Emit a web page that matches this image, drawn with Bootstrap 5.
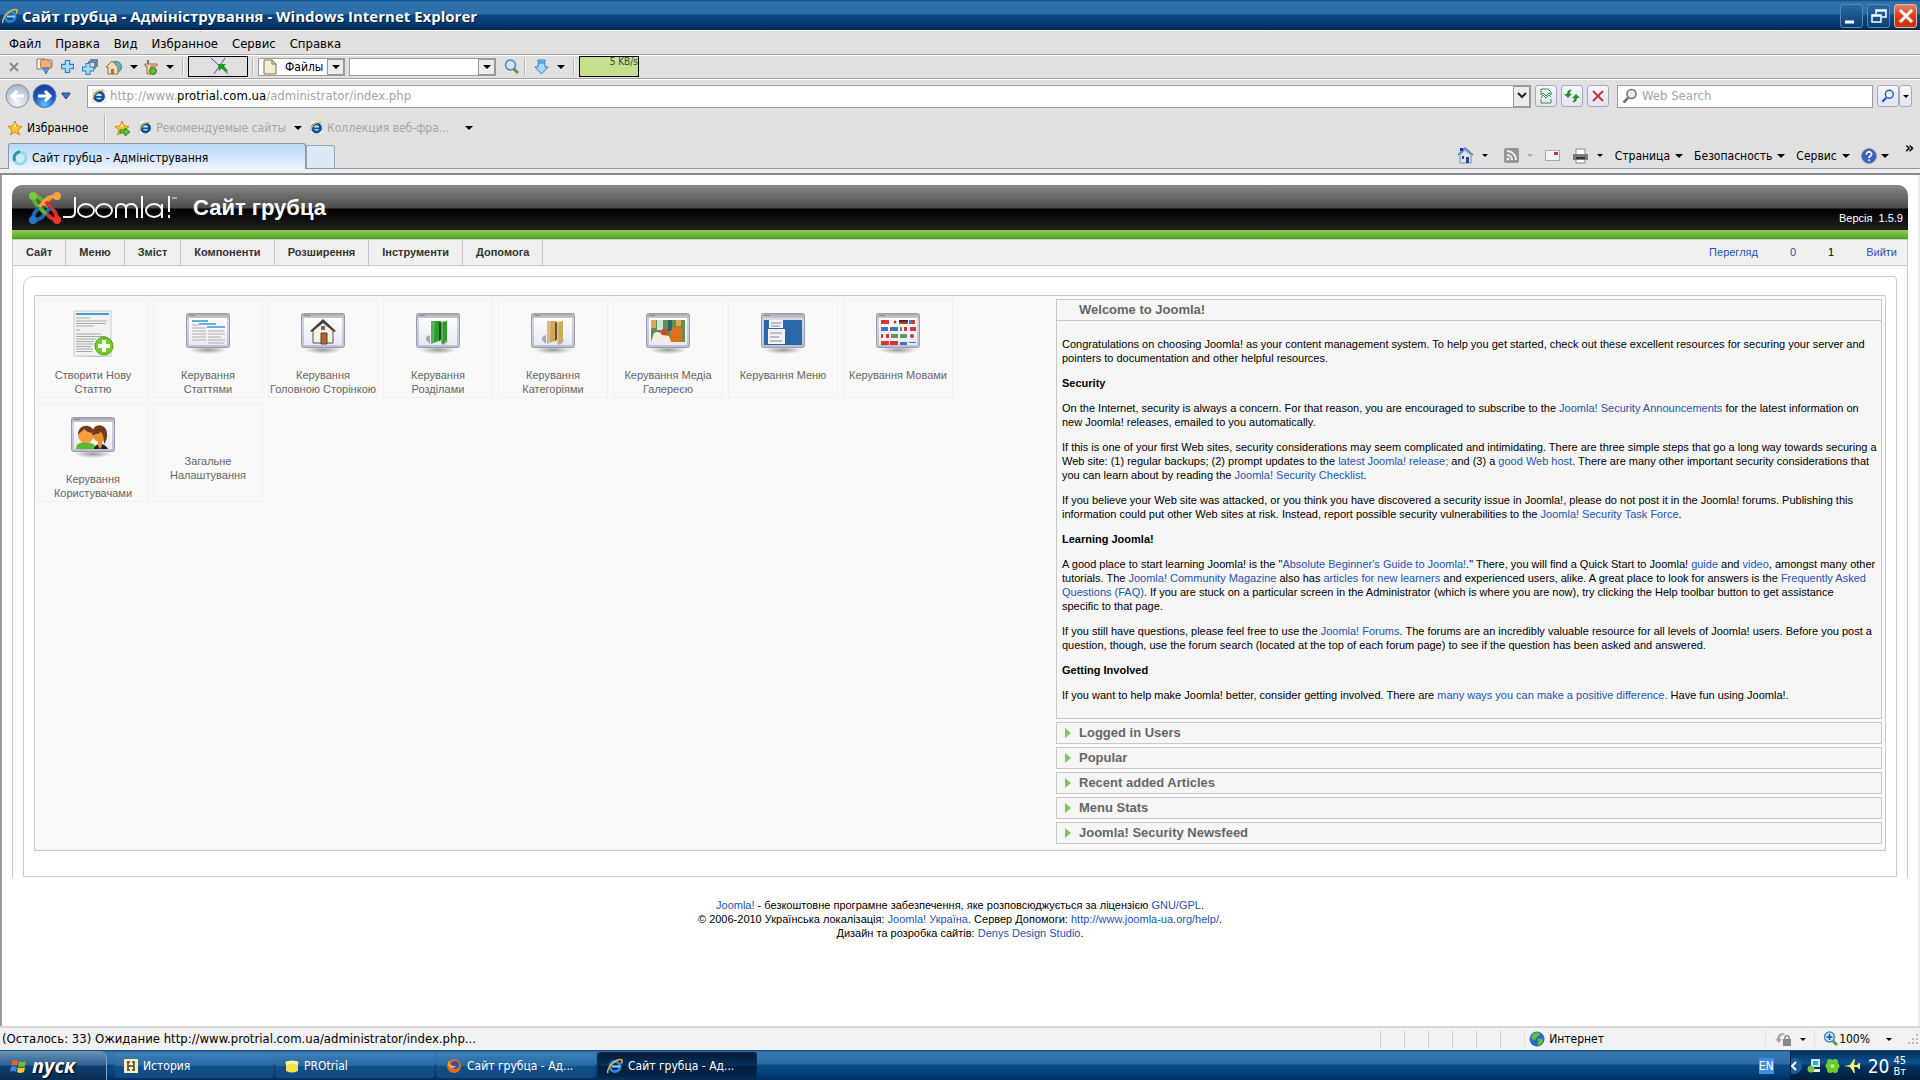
<!DOCTYPE html>
<html lang="uk">
<head>
<meta charset="utf-8">
<meta name="viewport" content="width=device-width, initial-scale=1">
<title>Сайт грубца - Адміністрування</title>
<link href="https://cdn.jsdelivr.net/npm/bootstrap@5.3.0/dist/css/bootstrap.min.css" rel="stylesheet">
<style>
:root{--ui:"DejaVu Sans Condensed","DejaVu Sans",sans-serif;--line:#c8c8c8;--lnk:#2454b0}
body{font-family:var(--ui);font-size:12px;line-height:16px;color:#000;background:#fff;min-height:100vh;overflow-x:hidden}
button,input,select{font:inherit;color:inherit;border-radius:0}
a{text-decoration:none}
svg{flex:none;display:block}
.plain{background:none;border:0;padding:0;display:flex;align-items:center}
.down{width:0;height:0;border:4px solid transparent;border-top-color:#000;border-bottom:0;flex:none}
.down.tiny{border-width:3px;border-bottom:0}
.titlebar{height:30px;background:linear-gradient(#0c4c86 0,#2e72ac 2px,#2c6da7 14px,#0a4a86 15px,#043c74 24px,#02254e 30px);color:#fff;padding:1px 3px 0 2px}
.titlebar h1{font:bold 15px/20px "Open Sans",sans-serif;margin:0;text-shadow:1px 1px 1px #01203f}
.winbtn{width:23px;height:24px;border:1px solid #5588b4;border-radius:3px;background:linear-gradient(#2a69a2,#0a3f76);display:flex;align-items:center;justify-content:center;padding:0}
.winbtn.shut{background:linear-gradient(#e8826a,#dc3c14 50%,#c83010);border-color:#f0b0a0}
.chrome{background:#e0e0e0}
.menubar{height:25px;border-top:1px solid #fff;border-bottom:1px solid #aaa;padding:2px 9px 0;gap:14px;font-size:13px}
.menubar a,.cmd{color:#000}
.toolrow{height:24px;border-top:1px solid #fff;border-bottom:1px solid #a4a4a4;padding:0 0 1px 8px}
.vsep{width:2px;align-self:stretch;margin:2px 0;border-left:1px solid #b4b4b4;border-right:1px solid #f8f8f8;flex:none}
.meter{width:60px;height:21px;border:1px solid #000;flex:none}
.meter.go{background:#c4e08c;font-size:10px;line-height:10px;text-align:right;color:#444}
.field{background:#fff;border:1px solid #9a9a9a;display:flex;align-items:center}
.field input,.field select{border:0;outline:0;background:none;appearance:none;min-width:0;padding:0}
.field input::placeholder{color:#a4a4a4}
.drop{width:17px;height:16px;border:1px solid #999;background:#ececec;display:flex;align-items:center;justify-content:center;padding:0;flex:none}
.navrow{height:33px;border-top:1px solid #fff;padding:0 8px 0 5px;font-size:13px}
.addr{height:23px;min-width:0}
.addr .grey,.dim{color:#a4a4a4}
.gobtn{width:22px;height:22px;border:1px solid #a4a8bc;border-radius:3px;background:linear-gradient(#f6f6fa,#e2e4f0);display:flex;align-items:center;justify-content:center;padding:0;flex:none}
.favrow{height:31px;padding-left:7px}
.tabrow{height:26px;padding:0 6px 0 8px;border-bottom:1px solid #9298a4}
.tab{height:26px;width:298px;border:1px solid #8c96a4;border-bottom:0;border-radius:3px 3px 0 0;background:linear-gradient(#bcd8f8,#d4e6fa 60%,#eef5fd);padding:2px 3px 0;margin-bottom:-1px}
.newtab{height:23px;width:29px;border:1px solid #9aa4b2;border-bottom:0;border-radius:0 3px 0 0;background:#dce8f6;padding:0}
.cmds .plain[data-menu]{gap:5px;margin-right:11px;white-space:nowrap}
.understrip{height:6px;background:#ecf0f6;border-bottom:2px solid #8a8c92}
.viewport{border-left:2px solid #9a9aa0;border-right:2px solid #ececf0;padding:10px 10px 0;font-family:"Liberation Sans",Arial,sans-serif;font-size:11px;line-height:14px}
.viewport a{color:var(--lnk)}
.jhead{height:45px;border-radius:10px 10px 0 0;background:linear-gradient(#878787 0,#4c4c4c 23px,#000 24px,#202020 45px);color:#fff;padding:0 5px 0 16px}
.jhead h2{font-size:22px;line-height:26px;font-weight:bold;margin:0}
.jgreen{height:10px;background:linear-gradient(#8cca55,#6cb83a 50%,#569a30 90%,#b9dd9c 90%)}
.jframe{border:1px solid var(--line);border-top:0;border-bottom:0}
.jmenu{height:26px;background:#f0f0f0;border-bottom:1px solid var(--line)}
.jmenu .items a{color:#333;font-weight:bold;line-height:25px;padding:0 13px;border-right:1px solid var(--line)}
.jstat{padding-right:10px;gap:32px;line-height:24px}
.jbox{margin:10px 10px 0;padding:18px 10px 25px;border:1px solid var(--line);border-radius:10px 4px 0 0}
.jpanel{border:1px solid var(--line);background:#f9f9f9;padding:3px;min-height:556px}
.cells{gap:5px;flex:1;align-content:flex-start;padding-right:50px}
.cell{width:110px;height:99px;border:1px solid #f0f0f0;padding-top:9px;text-align:center;color:#666!important;display:flex;flex-direction:column;align-items:center}
.cell svg{margin-bottom:11px}
.cell.noimg{justify-content:center;padding-top:31px}
.side{width:826px;flex:none;display:flex;flex-direction:column;gap:3px}
.pane{border:1px solid var(--line);background:#f6f6f6}
.pane h3{margin:0;font-size:13px}
.pane h3 button{background:none;border:0;width:100%;text-align:left;height:20px;padding:0 8px;color:#666;font-weight:bold;display:flex;align-items:center;gap:8px}
.pane .tri{width:6px;height:10px;border-left:6px solid #84c464;border-top:5px solid transparent;border-bottom:5px solid transparent}
.pane.open .tri{visibility:hidden}
.words{border-top:1px solid var(--line);padding:16px 5px 16px}
.words p,.words h4{margin:0 0 11px;white-space:nowrap}
.words h4{font-size:11px;line-height:14px;font-weight:bold}
.words>:last-child{margin:0}
.jfoot{text-align:center;padding:21px 0 0}
.statusbar{height:24px;background:#f2f2f2;border-top:2px solid #d8d8d8}
.cellsep{width:24px;border-left:1px solid #ccc;align-self:stretch;margin:3px 0;flex:none}
.loading{font-size:13px;padding-left:2px}
.taskbar{height:30px;background:linear-gradient(#0a3d6e 0,#3878b2 2px,#2a6ca6 14px,#0a4a86 15px,#054078 24px,#022c58);color:#fff;padding-top:1px}
.start{width:107px;height:29px;border:0;border-right:1px solid #7aa6cc;border-radius:0 8px 0 0;background:linear-gradient(#6a92b6,#2d6192 14px,#0d3f70 15px,#0a2c50);color:#fff;font:italic bold 20px/26px "Open Sans",sans-serif;padding:0 0 0 10px;text-shadow:1px 1px 2px #000}
.tasks{gap:3px}
.task{height:25px;width:158px;border:0;border-radius:2px;background:linear-gradient(#3c80ba,#2768a2 50%,#114f8a 51%,#0f4a82);color:#fff;padding:0 9px;text-align:left;gap:5px;display:flex;align-items:center;white-space:nowrap}
.task.on{background:linear-gradient(#021c38,#04305c 50%,#001c3c 51%,#02284e);box-shadow:0 0 0 1px #0a2c50}
.tray{background:linear-gradient(#052f58,#0b5290 40%,#03305c 55%,#011d3c);border-left:1px solid #02203f;padding:0 14px 0 0;height:29px}
.big{font-size:19px;line-height:22px}
.stack{font-size:11px;line-height:11px}
</style>
<script src="https://cdn.jsdelivr.net/npm/bootstrap@5.3.0/dist/js/bootstrap.bundle.min.js"></script>
</head>
<body class="d-flex flex-column">
<svg width="0" height="0" class="position-absolute" aria-hidden="true">
<defs>
<linearGradient id="gw" x1="0" y1="0" x2="0" y2="1"><stop offset="0" stop-color="#fff"/><stop offset="1" stop-color="#e6e8f4"/></linearGradient>
<linearGradient id="gfr" x1="0" y1="0" x2="0" y2="1"><stop offset="0" stop-color="#a8aab2"/><stop offset=".2" stop-color="#d4d6e0"/><stop offset="1" stop-color="#bcc0d4"/></linearGradient>
<radialGradient id="gsh"><stop offset="0" stop-color="#999"/><stop offset="1" stop-color="#999" stop-opacity="0"/></radialGradient>
<radialGradient id="gbl" cx=".5" cy=".85" r=".9"><stop offset="0" stop-color="#5cc4ff"/><stop offset=".5" stop-color="#1c5cc0"/><stop offset="1" stop-color="#14388c"/></radialGradient>
<radialGradient id="ggr" cx=".5" cy=".8" r=".9"><stop offset="0" stop-color="#f4f8fc"/><stop offset="1" stop-color="#9cacc0"/></radialGradient>
<symbol id="ie" viewBox="0 0 16 16"><circle cx="8" cy="8.5" r="5" fill="none" stroke="#2a86d8" stroke-width="3"/><path d="M5 8.5h8" stroke="#9cd8fa" stroke-width="2"/><path d="M1 15C-1 11 8 1 14 1.500c2 .5 1 3 0 4" fill="none" stroke="#f0b830" stroke-width="1.500"/></symbol>
<symbol id="iepage" viewBox="0 0 16 16"><path d="M1 0h11l3 3v13H1z" fill="#fdfdfd" stroke="#d0d4dc"/><circle cx="8" cy="8.500" r="5" fill="#bce4fa" stroke="#14509c" stroke-width="3.500"/><path d="M4 9h9" stroke="#14509c" stroke-width="2"/><path d="M1 12C1 6 7 0 14 2" fill="none" stroke="#e0c050" stroke-width="1.500"/></symbol>
<symbol id="win" viewBox="0 0 48 48"><ellipse cx="24" cy="41" rx="19" ry="4" fill="url(#gsh)"/><rect x="2.500" y="4.500" width="43" height="34" rx="2" fill="url(#gfr)" stroke="#9a9cac"/><rect x="5" y="9" width="38" height="27" fill="url(#gw)"/><path d="M5 6.500h6" stroke="#888"/></symbol>
<symbol id="star" viewBox="0 0 16 16"><path d="M8 1l2 5 5 .5-4 3.500 1.500 5L8 12l-4.500 3L5 10 1 6.500 6 6z" fill="#ffc428" stroke="#d88a10"/><path d="M8 3l1 4-3 0z" fill="#fff0a0"/></symbol>
<symbol id="mag" viewBox="0 0 16 16"><path d="M6 10l-4.500 4.500" stroke="currentColor" stroke-width="2.500"/><circle cx="9.500" cy="6" r="4.500" fill="#e4f2fc" stroke="currentColor" stroke-width="1.600"/></symbol>
<symbol id="magr" viewBox="0 0 16 16"><path d="M9 9l5 5" stroke="#6c9440" stroke-width="3"/><circle cx="6.500" cy="6" r="5" fill="#c4e8fc" stroke="#5088b8" stroke-width="1.500"/></symbol>
<symbol id="cross" viewBox="0 0 12 12"><path d="M6 0v12M0 6h12" stroke="#2f7cc0" stroke-width="5"/><path d="M6 1v10M1 6h10" stroke="#a8dcfa" stroke-width="3"/></symbol>
<symbol id="folder" viewBox="0 0 22 25"><path d="M0 17l4-2v9l-4-4z" fill="#aaa"/><path d="M19 19l3 2-4 4-3-1z" fill="#aaa"/><path d="M5 1h10v19L5 24z" fill="currentColor"/><path d="M13 2l3 1v14l-3 5z" fill="#000" opacity=".5"/><path d="M15 2l6-1v19l-4 4-2-2z" fill="currentColor"/><path d="M5 1h4L8 23l-3 1zM15 2l2-.5v21l-2-1z" fill="#fff" opacity=".22"/></symbol>
</defs>
</svg>

<header class="titlebar d-flex align-items-center gap-1">
<svg width="16" height="16"><use href="#ie"/></svg>
<h1 class="flex-grow-1">Сайт грубца - Адміністрування - Windows Internet Explorer</h1>
<button class="winbtn" aria-label="Свернуть"><svg width="13" height="16"><path d="M0 14h9" stroke="#fff" stroke-width="3"/></svg></button>
<button class="winbtn" aria-label="Восстановить"><svg width="16" height="16" fill="none" stroke="#fff" stroke-width="1.500"><path d="M5 6V2h10v7h-4M5 3h10M1 7h9v7H1zM1 8h9"/></svg></button>
<button class="winbtn shut" aria-label="Закрыть"><svg width="16" height="16"><path d="M2 2l12 12M14 2L2 14" stroke="#fff" stroke-width="3"/></svg></button>
</header>

<div class="chrome">
<nav class="menubar d-flex align-items-center"><a href="#">Файл</a><a href="#">Правка</a><a href="#">Вид</a><a href="#">Избранное</a><a href="#">Сервис</a><a href="#">Справка</a></nav>
<div class="toolrow d-flex align-items-center">
<button class="plain me-3" aria-label="Закрыть панель"><svg width="12" height="12"><path d="M2 2l8 8M10 2L2 10" stroke="#888" stroke-width="2"/></svg></button>
<button class="plain" aria-label="Загрузка"><svg width="17" height="17"><path d="M1 1h8v10H1zM11 2h5v7h-5z" fill="#fff" stroke="#777"/><path d="M4 3c4-3 9-1 11 2v5H5z" fill="#f0b078" stroke="#b87444"/><path d="M7 10h6l-3 6z" fill="#5c9ce0" stroke="#3870b0"/></svg></button>
<button class="plain ms-2" aria-label="Добавить"><svg width="13" height="13"><use href="#cross"/></svg></button>
<button class="plain ms-2" aria-label="Добавить все"><svg width="16" height="16"><path d="M6 3h7v7M8 1h7v7" fill="none" stroke="#44688c" stroke-width="1.500"/><use href="#cross" x="0" y="4" width="12" height="12"/></svg></button>
<button class="plain ms-2 me-2" aria-label="Домой"><svg width="16" height="16"><circle cx="10" cy="8" r="5.500" fill="#5ab4e4" stroke="#3c8c3c"/><path d="M0 8l6-6 6 6v7H2V8z" fill="#f4dcb0" stroke="#997044"/><path d="M5 10h3v5H5z" fill="#a87444"/></svg></button>
<span class="down"></span>
<button class="plain ms-1 me-2" aria-label="Правка"><svg width="16" height="16"><path d="M3 5h12v2H9v8H5V7H3z" fill="#f4d4b4" stroke="#98684c"/><path d="M6 1v4" stroke="#98684c" stroke-width="2"/><circle cx="11" cy="12" r="3.500" fill="#68b83c" stroke="#387818"/></svg></button>
<span class="down me-2"></span>
<span class="vsep"></span>
<span class="meter ms-1"><svg width="58" height="19"><path d="M22 1l17 16M36 1L25 17" stroke="#4050b8"/><path d="M29 7h8l-2 2 4 5-2 1-4-4-3 3z" fill="#1c9c1c"/></svg></span>
<span class="vsep ms-1"></span>
<label class="field ms-1 ps-1"><svg width="14" height="16" class="me-2"><path d="M1 1h8l4 4v10H1z" fill="#f4ecd4" stroke="#777450"/><path d="M9 1v4h4" fill="none" stroke="#777450"/></svg><select style="width:42px" aria-label="Тип"><option>Файлы</option></select><span class="drop"><span class="down"></span></span></label>
<div class="field ms-1" style="width:147px"><input class="flex-grow-1" aria-label="Поиск файлов"><button class="drop" aria-label="Список"><span class="down"></span></button></div>
<button class="plain ms-2 me-1" aria-label="Найти"><svg width="16" height="16"><use href="#magr"/></svg></button>
<span class="vsep me-2"></span>
<button class="plain me-2" aria-label="Загрузки"><svg width="15" height="16"><path d="M4 1h7v2H4zM4 4h7v4h3l-6.500 7L1 8h3z" fill="#a0dcfa" stroke="#2f80c0"/></svg></button>
<span class="down me-2"></span>
<span class="vsep"></span>
<span class="meter go ms-1">5 KB/s</span>
</div>

<div class="navrow d-flex align-items-center">
<button class="plain" aria-label="Назад"><svg width="26" height="26"><circle cx="12.500" cy="13" r="11.500" fill="url(#ggr)" stroke="#8090a4"/><path d="M19 13H8M12 8l-5 5 5 5" fill="none" stroke="#fff" stroke-width="3"/></svg></button>
<button class="plain" aria-label="Вперёд"><svg width="26" height="26"><circle cx="13.500" cy="13" r="11.500" fill="url(#gbl)" stroke="#5c7ca8"/><path d="M7 13h11M14 8l5 5-5 5" fill="none" stroke="#fff" stroke-width="3"/></svg></button>
<button class="plain ms-1 me-3" aria-label="Последние страницы"><svg width="10" height="8"><path d="M1 1h8v1L5 7 1 2z" fill="#3c78bc" stroke="#244c80"/></svg></button>
<div class="field addr flex-grow-1 ps-1"><svg width="14" height="14" class="me-1"><use href="#iepage"/></svg><span class="flex-grow-1"><span class="grey">http://www.</span>protrial.com.ua<span class="grey">/administrator/index.php</span></span><button class="drop" style="height:21px" aria-label="Адреса"><svg width="10" height="8"><path d="M1 1l4 4 4-4" fill="none" stroke="#222" stroke-width="2"/></svg></button></div>
<div class="d-flex gap-1 ms-1 me-2"><button class="gobtn" aria-label="Совместимость"><svg width="14" height="16" fill="none" stroke="#2c9444"><path d="M2 7V1h7l3 3v3M2 11v4h10v-4M2 10l2-3 3 3 3-3 2 2M2 7l2-2 3 3 3-3 2 2"/></svg></button><button class="gobtn" aria-label="Обновить"><svg width="16" height="16"><path d="M8 2c-3-1-5 1-5 4H0l4 4 4-4H6c0-2 0-3 2-4zM8 14c3 1 5-1 5-4h3l-4-4-4 4h2c0 2 0 3-2 4z" fill="#2c8c30"/></svg></button><button class="gobtn" aria-label="Стоп"><svg width="12" height="12"><path d="M1 1l10 10M11 1L1 11" stroke="#c03838" stroke-width="2"/></svg></button></div>
<label class="field addr" style="width:256px"><svg width="16" height="16" class="mx-1 text-secondary"><use href="#mag"/></svg><input class="flex-grow-1" placeholder="Web Search" aria-label="Web Search"></label>
<button class="gobtn ms-1" aria-label="Искать" style="color:#2454c8"><svg width="14" height="14"><use href="#mag"/></svg></button><button class="gobtn" style="width:13px" aria-label="Параметры поиска"><span class="down tiny"></span></button>
</div>

<div class="favrow d-flex align-items-center">
<svg width="16" height="16"><use href="#star"/></svg><a class="cmd ms-1 me-3" href="#">Избранное</a><span class="vsep me-2"></span>
<svg width="17" height="16"><use href="#star" width="16"/><path d="M6 10h5V8l5 4-5 4v-3H6z" fill="#5cc83c" stroke="#2c8820"/></svg>
<svg width="13" height="13" class="ms-2 me-1"><use href="#iepage"/></svg><a class="dim me-2" href="#">Рекомендуемые сайты</a><span class="down"></span>
<svg width="13" height="13" class="ms-2 me-1"><use href="#iepage"/></svg><a class="dim me-3" href="#">Коллекция веб-фра...</a><span class="down"></span>
</div>

<div class="tabrow d-flex align-items-end">
<button class="tab d-flex align-items-center gap-1"><svg width="16" height="16"><circle cx="8" cy="8" r="6" fill="none" stroke="#8cdce8" stroke-width="3"/><path d="M8 2a6 6 0 0 0-5 9" fill="none" stroke="#209ca8" stroke-width="3"/></svg>Сайт грубца - Адміністрування</button><button class="newtab" aria-label="Новая вкладка"></button>
<div class="cmds ms-auto d-flex align-items-center align-self-start pt-1">
<button class="plain" aria-label="Домашняя"><svg width="17" height="17"><path d="M1 8l7-7 8 7" fill="none" stroke="#5878b0" stroke-width="1.500"/><path d="M3 8l5-5 6 5v8H3z" fill="#d8e4f8" stroke="#7890b8"/><path d="M3 1h3v3H3z" fill="#2030b0"/><path d="M9 10h3v6H9z" fill="#2848a0"/><path d="M5 9h2v3H5z" fill="#445"/></svg><span class="down tiny ms-2"></span></button>
<button class="plain ms-3" aria-label="Каналы"><svg width="15" height="15"><rect width="15" height="15" rx="2" fill="#969696"/><g fill="none" stroke="#f0f0f0" stroke-width="2"><path d="M3 7a5 5 0 0 1 5 5M3 3a9 9 0 0 1 9 9"/></g><circle cx="4" cy="11" r="1.500" fill="#f0f0f0"/></svg><span class="down tiny opacity-25 ms-2 me-2"></span></button>
<button class="plain ms-1" aria-label="Почта"><svg width="15" height="11"><rect x=".5" y=".5" width="14" height="10" fill="#f4f4fa" stroke="#aaa"/><path d="M9 2h4v3H9z" fill="#d03030"/></svg></button>
<button class="plain ms-2 ps-1 me-2" aria-label="Печать"><svg width="17" height="16"><path d="M4 6V1h9v5M4 11h9v4H4z" fill="#fff" stroke="#888"/><path d="M1 6h15v6H1z" fill="#777c84"/><path d="M4 9h9v2H4z" fill="#333"/></svg><span class="down tiny ms-2 me-1"></span></button>
<button class="plain" data-menu="page">Страница<span class="down"></span></button>
<button class="plain" data-menu="safety">Безопасность<span class="down"></span></button>
<button class="plain" data-menu="tools">Сервис<span class="down"></span></button>
<button class="plain me-3" aria-label="Справка"><svg width="16" height="16" class="me-1"><circle cx="8" cy="8" r="7.500" fill="#3c64b8" stroke="#8c98b4"/><path d="M5.500 6.500c0-4 5.500-3 5 0-.3 1.500-2.500 1.500-2.500 3.500M8 11.500v1.500" fill="none" stroke="#fff" stroke-width="1.800"/></svg><span class="down"></span></button>
<b class="align-self-start fs-6" style="line-height:1px">»</b>
</div>
</div>
<div class="understrip"></div>
</div>

<main class="viewport flex-grow-1">
<div class="jhead d-flex align-items-center">
<svg width="34" height="34" viewBox="0 0 34 34" fill="none" stroke-linecap="round" stroke-width="4"><path d="M5 5q1 7 5 10l5 5" stroke="#5ab030"/><path d="M5 5q6 0 9 4l6 6" stroke="#5ab030"/><path d="M29 5q-6 0-9 4l-4 4" stroke="#f08c20"/><path d="M29 5q-8 0-11 3l-6 7" stroke="#f8a040" stroke-width="3"/><path d="M29 29q0-7-5-11l-5-6" stroke="#dc2c2c"/><path d="M29 29q-6-1-9-5" stroke="#dc2c2c"/><path d="M5 29q7 0 10-4l6-7" stroke="#1c68b0"/><path d="M5 29q0-6 3-9l2-2" stroke="#1c68b0"/><path d="M13 18l4 4" stroke="#5ab030"/><g stroke="none"><circle cx="5" cy="5" r="4" fill="#78c840"/><circle cx="29" cy="5" r="4" fill="#fca040"/><circle cx="29" cy="29" r="4" fill="#ee3434"/><circle cx="5" cy="29" r="4" fill="#2478c4"/></g></svg>
<svg width="115" height="28" viewBox="0 0 115 28" class="me-3" role="img" aria-label="Joomla!" fill="none" stroke="#f4f4f4" stroke-width="2"><path d="M13 3v15q0 5-5 5H1"/><ellipse cx="24" cy="16.500" rx="8" ry="6.500"/><ellipse cx="42" cy="16.500" rx="8" ry="6.500"/><path d="M54 24v-9q0-5 5-5t5 5v9M64 15q0-5 5-5t6 5v9M80 2v22"/><ellipse cx="92" cy="16.500" rx="8" ry="6.500"/><path d="M100 10v14M107 2v16M107 21v3"/><path d="M110 4h5" stroke-width="1"/></svg>
<h2>Сайт грубца</h2>
<span class="ms-auto pt-3 mt-1">Версія&nbsp; 1.5.9</span>
</div>
<div class="jgreen"></div>
<div class="jframe">
<nav class="jmenu d-flex">
<div class="items d-flex"><a href="#">Сайт</a><a href="#">Меню</a><a href="#">Зміст</a><a href="#">Компоненти</a><a href="#">Розширення</a><a href="#">Інструменти</a><a href="#">Допомога</a></div>
<div class="jstat d-flex ms-auto"><a href="#">Перегляд</a><a href="#">0</a><span>1</span><a href="#">Вийти</a></div>
</nav>
<div class="jbox">
<div class="jpanel d-flex">
<div class="cells d-flex flex-wrap">
<a class="cell" href="#"><svg width="48" height="48"><ellipse cx="26" cy="47" rx="20" ry="2" fill="url(#gsh)"/><path d="M5 2h37v45H5z" fill="#f2f2f2" stroke="#ccc"/><path d="M7 4h33v2H7z" fill="#3c9cd4"/><path d="M7 9h14M7 12h31M7 14.500h30M7 17h18M7 21h4M7 25h25M7 27.500h30M7 30h20M7 32.500h18M7 35h18M7 37.500h15M7 40h17M7 42.500h16" stroke="#a8a8a8"/><circle cx="35" cy="37" r="9" fill="#74cc28" stroke="#4c9c18"/><path d="M35 31v12M29 37h12" stroke="#fff" stroke-width="4"/></svg>Створити Нову<br>Статтю</a>
<a class="cell" href="#"><svg width="48" height="48"><use href="#win"/><path d="M8 12h16M15 15h17M23 18h18" stroke="#68b0dc" stroke-width="2"/><path d="M8 16h7M8 19h14M8 22h14M8 25h14M8 28h14M8 31h14M24 22h16M24 25h17M24 28h13M24 31h17M24 34h16" stroke="#c4c4c4" stroke-width="1.500"/></svg>Керування<br>Статтями</a>
<a class="cell" href="#"><svg width="48" height="48"><use href="#win"/><path d="M14 20l10-8 10 8v14H14z" fill="#f6f0e8" stroke="#554"/><path d="M11 22L24 10l13 12-2 1-11-9-11 9z" fill="#4c4038"/><path d="M22 24h6v11h-6z" fill="#b86428" stroke="#543"/><path d="M22 17h4v4h-4z" fill="#765"/></svg>Керування<br>Головною Сторінкою</a>
<a class="cell" href="#"><svg width="48" height="48" style="color:#2c9c2c"><use href="#win"/><use href="#folder" x="12" y="11" width="22" height="25"/></svg>Керування<br>Розділами</a>
<a class="cell" href="#"><svg width="48" height="48" style="color:#d0a858"><use href="#win"/><use href="#folder" x="13" y="11" width="22" height="25"/></svg>Керування<br>Категоріями</a>
<a class="cell" href="#"><svg width="48" height="48"><use href="#win"/><path d="M7 11h34v22H7z" fill="#5c9448"/><path d="M7 11h5v8H7zM32 11h5v6h-5z" fill="#d8a860"/><path d="M13 11h6v10h-6z" fill="#cce4e8"/><path d="M24 11h4v11h-4z" fill="#34606c"/><path d="M18 20h6v6h-6z" fill="#d84820"/><path d="M27 21q6-6 11-2v14H26z" fill="#e07020"/><path d="M7 33l3-9q5-3 8 2l7 1 2 6z" fill="#f4ece0"/></svg>Керування Медіа<br>Галереєю</a>
<a class="cell" href="#"><svg width="48" height="48"><use href="#win"/><path d="M5 9h38v27H5z" fill="#2c68a8"/><path d="M5 9h38v2H5z" fill="#d4dce8"/><path d="M10 11h14v8H10zM9 20h17v15H9z" fill="#f0f2f6"/><path d="M12 14h10M12 17h9M11 24h12M11 28h9M11 32h12" stroke="#889"/></svg>Керування Меню</a>
<a class="cell" href="#"><svg width="48" height="48"><use href="#win"/><path d="M7 11h8v4H7zM25 13h9v2h-9zM41 11h-3v4h3zM36 18h6v4h-6zM7 25h8v4H7zM7 32h8v4H7zM16 32h8v4h-8zM30 18h3v4h-3z" fill="#d83434"/><path d="M25 11h9v2h-9z" fill="#333"/><path d="M35 11h3v4h-3zM7 18h7v4H7zM16 18h8v4h-8zM26 33h7v3h-7zM35 33h7v1h-7z" fill="#4474b8"/><path d="M26 18h2v4h-2zM17 25h7v4h-7zM26 25h7v4h-7z" fill="#5c9c54"/><path d="M9 25h3v4H9zM19 11h4v4h-4z" fill="#fff"/><circle cx="21" cy="13" r="1.500" fill="#e02020"/><circle cx="38" cy="27" r="2" fill="#c03050"/></svg>Керування Мовами</a>
<a class="cell" href="#"><svg width="48" height="48"><use href="#win"/><path d="M7 36c0-5 4-7 9-7s11 2 11 7z" fill="#5cb830"/><path d="M25 36c0-5 10-8 14 0z" fill="#222"/><circle cx="17" cy="22" r="8" fill="#f4a040"/><circle cx="31" cy="22" r="7" fill="#e89030"/><path d="M9 22c0-12 15-12 16-2-5 0-8-2-10-4-2 3-4 3-6 6zM23 22c0-14 16-12 15 0 0 5-2 8-3 9 0-5-1-10-3-12-2 2-6 2-9 3z" fill="#743c1c"/><path d="M29 28h4v5l-2 3-2-3z" fill="#e89030"/></svg>Керування<br>Користувачами</a>
<a class="cell noimg" href="#">Загальне<br>Налаштування</a>
</div>
<div class="side">
<section class="pane open"><h3><button><span class="tri"></span>Welcome to Joomla!</button></h3>
<div class="words">
<p>Congratulations on choosing Joomla! as your content management system. To help you get started, check out these excellent resources for securing your server and<br>pointers to documentation and other helpful resources.</p>
<h4>Security</h4>
<p>On the Internet, security is always a concern. For that reason, you are encouraged to subscribe to the <a href="#">Joomla! Security Announcements</a> for the latest information on<br>new Joomla! releases, emailed to you automatically.</p>
<p>If this is one of your first Web sites, security considerations may seem complicated and intimidating. There are three simple steps that go a long way towards securing a<br>Web site: (1) regular backups; (2) prompt updates to the <a href="#">latest Joomla! release;</a> and (3) a <a href="#">good Web host</a>. There are many other important security considerations that<br>you can learn about by reading the <a href="#">Joomla! Security Checklist</a>.</p>
<p>If you believe your Web site was attacked, or you think you have discovered a security issue in Joomla!, please do not post it in the Joomla! forums. Publishing this<br>information could put other Web sites at risk. Instead, report possible security vulnerabilities to the <a href="#">Joomla! Security Task Force</a>.</p>
<h4>Learning Joomla!</h4>
<p>A good place to start learning Joomla! is the "<a href="#">Absolute Beginner's Guide to Joomla!</a>." There, you will find a Quick Start to Joomla! <a href="#">guide</a> and <a href="#">video</a>, amongst many other<br>tutorials. The <a href="#">Joomla! Community Magazine</a> also has <a href="#">articles for new learners</a> and experienced users, alike. A great place to look for answers is the <a href="#">Frequently Asked<br>Questions (FAQ)</a>. If you are stuck on a particular screen in the Administrator (which is where you are now), try clicking the Help toolbar button to get assistance<br>specific to that page.</p>
<p>If you still have questions, please feel free to use the <a href="#">Joomla! Forums</a>. The forums are an incredibly valuable resource for all levels of Joomla! users. Before you post a<br>question, though, use the forum search (located at the top of each forum page) to see if the question has been asked and answered.</p>
<h4>Getting Involved</h4>
<p>If you want to help make Joomla! better, consider getting involved. There are <a href="#">many ways you can make a positive difference.</a> Have fun using Joomla!.</p>
</div></section>
<section class="pane"><h3><button><span class="tri"></span>Logged in Users</button></h3></section>
<section class="pane"><h3><button><span class="tri"></span>Popular</button></h3></section>
<section class="pane"><h3><button><span class="tri"></span>Recent added Articles</button></h3></section>
<section class="pane"><h3><button><span class="tri"></span>Menu Stats</button></h3></section>
<section class="pane"><h3><button><span class="tri"></span>Joomla! Security Newsfeed</button></h3></section>
</div>
</div>
</div>
</div>
<footer class="jfoot"><a href="#">Joomla!</a> - безкоштовне програмне забезпечення, яке розповсюджується за ліцензією <a href="#">GNU/GPL</a>.<br>© 2006-2010 Українська локалізація: <a href="#">Joomla! Україна</a>. Сервер Допомоги: <a href="#">http://www.joomla-ua.org/help/</a>.<br>Дизайн та розробка сайтів: <a href="#">Denys Design Studio</a>.</footer>
</main>

<div class="statusbar d-flex align-items-center">
<span class="loading flex-grow-1">(Осталось: 33) Ожидание http://www.protrial.com.ua/administrator/index.php...</span>
<span class="cellsep"></span><span class="cellsep"></span><span class="cellsep"></span><span class="cellsep"></span><span class="cellsep"></span><span class="cellsep"></span>
<span class="d-flex align-items-center border-start ps-1 gap-1" style="width:241px"><svg width="16" height="16"><circle cx="8" cy="8" r="7.500" fill="#2c6cc0"/><path d="M3 4c3-4 7-3 8-1-1 3-4 2-4 5-2 2-5 0-5-2zM9 8c3-1 5 0 5 2s-3 5-5 4z" fill="#5cc044"/></svg>Интернет</span>
<button class="plain border-start ps-2 pe-2 gap-2" aria-label="Защита"><svg width="18" height="16"><path d="M9 2C4 2 3 6 3 8H1l4 4 3-4H6c0-3 1-4 5-4z" fill="#aaa"/><path d="M9 8h8v7H9z" fill="#888"/><path d="M11 8V6q2-3 4 0v2" fill="none" stroke="#888" stroke-width="1.500"/></svg><span class="down tiny"></span></button>
<button class="plain border-start ps-2 text-nowrap"><svg width="16" height="16"><use href="#magr"/><path d="M6.500 3v6M3.500 6h6" stroke="#1848b0" stroke-width="1.500"/></svg>100%<span class="down tiny ms-3 me-3"></span></button>
<svg width="12" height="14" fill="#bbb"><path d="M8 2h2v2H8zM4 6h2v2H4zM8 6h2v2H8zM0 10h2v2H0zM4 10h2v2H4zM8 10h2v2H8z"/></svg>
</div>
<div class="taskbar d-flex align-items-center">
<button class="start d-flex align-items-center gap-1 me-2"><svg width="18" height="18"><path d="M2 4q3-2 6 0L7 9Q4 7 1 9z" fill="#e8602c"/><path d="M9 4q3 2 7 0l-1 5q-4 2-7 0z" fill="#78b83c"/><path d="M1 10q3-2 6 0l-1 5q-3-2-6 0z" fill="#3c84dc"/><path d="M8 10q3 2 7 0l-1 5q-4 2-7 0z" fill="#f8c82c"/></svg>пуск</button>
<div class="tasks d-flex me-auto">
<button class="task"><svg width="14" height="14"><rect width="14" height="14" fill="#f8ecc0"/><path d="M3 3h3M4 3v8M3 11h3M8 3h3M10 3v8M8 11h3M4 7h6" stroke="#442" stroke-width="1.500"/></svg>История</button>
<button class="task"><svg width="14" height="14"><path d="M1 2h12v10q-6 3-12 0z" fill="#f4e048"/><path d="M1 5q6-4 12 0" fill="none" stroke="#fff8a8" stroke-width="3"/></svg>PROtrial</button>
<button class="task"><svg width="16" height="16"><circle cx="8" cy="8" r="7" fill="#e8681c"/><circle cx="9" cy="7" r="4" fill="#3450a0"/><path d="M2 2c1 4 3 6 8 6-2 3-6 3-8-1z" fill="#fca83c"/></svg>Сайт грубца - Ад...</button>
<button class="task on"><svg width="16" height="16"><use href="#ie"/></svg>Сайт грубца - Ад...</button>
</div>
<span class="me-3" style="background:#3c90e4">EN</span>
<div class="tray d-flex align-items-center gap-1">
<svg width="12" height="16" fill="none"><circle cx="3" cy="8" r="8" fill="#1c5c98"/><path d="M5 4L1 8l4 4" stroke="#fff" stroke-width="2"/></svg>
<svg width="14" height="16"><path d="M4 1h9v8H4z" fill="#d4e4f0"/><path d="M6 3h5v4H6z" fill="#20b4c8"/><path d="M2 11h11v3H2z" fill="#e8eef4"/><circle cx="4" cy="11" r="3.500" fill="#78c44c"/></svg>
<svg width="15" height="16" fill="#6ccc2c"><circle cx="5" cy="4" r="3"/><circle cx="10" cy="4" r="3"/><circle cx="3.500" cy="8" r="3"/><circle cx="11.500" cy="8" r="3"/><circle cx="5" cy="12" r="3"/><circle cx="10" cy="12" r="3"/><circle cx="7.500" cy="8" r="2" fill="#c4f080"/></svg>
<svg width="16" height="16"><path d="M0 8l6-1 4-6h1L10 7h3l2-2h1v6h-1l-2-2h-3l1 6h-1L6 9z" fill="#f4f468"/></svg>
<span class="big ms-1">20</span><span class="stack text-center">45<br>Вт</span>
</div>
</div>
</body>
</html>
